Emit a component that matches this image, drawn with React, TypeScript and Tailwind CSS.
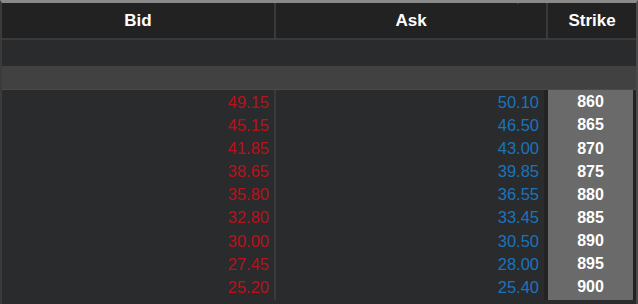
const rows = [
  { bid: "49.15", ask: "50.10", strike: "860" },
  { bid: "45.15", ask: "46.50", strike: "865" },
  { bid: "41.85", ask: "43.00", strike: "870" },
  { bid: "38.65", ask: "39.85", strike: "875" },
  { bid: "35.80", ask: "36.55", strike: "880" },
  { bid: "32.80", ask: "33.45", strike: "885" },
  { bid: "30.00", ask: "30.50", strike: "890" },
  { bid: "27.45", ask: "28.00", strike: "895" },
  { bid: "25.20", ask: "25.40", strike: "900" },
];

const cols = "grid grid-cols-[274px_272px_88px]";

export default function App() {
  return (
    <div className="relative h-[304px] w-[638px] overflow-hidden border-t-[3px] border-l-2 border-r-2 border-t-[#8a8a8a] border-l-[#3b3b3b] border-r-[#4a4a4a] bg-[#2a2b2d] font-['Liberation_Sans',Arial,sans-serif]">
      <span className="absolute left-[515px] top-0 h-px w-[2px] bg-[#2020ff]" />
      <div className={`${cols} h-[37px] bg-[#222222] text-[17px] font-bold text-white`}>
        <div className="flex items-center justify-center border-r-2 border-b-2 border-[#3a3a3a]">Bid</div>
        <div className="flex items-center justify-center border-r-2 border-b-2 border-[#3a3a3a]">Ask</div>
        <div className="flex items-center justify-center border-b-2 border-[#3a3a3a]">Strike</div>
      </div>
      <div className="h-[26px] bg-[#2a2b2d]" />
      <div className="h-[24px] border-b border-[#4a4a4a] bg-[#414141]" />
      {rows.map((r) => (
        <div key={r.strike} className={`${cols} h-[23.1px] text-[16.5px]`}>
          <div className="flex items-center justify-end border-r-2 border-[#3a3a3a] pr-[5px] text-[#b8121b]">{r.bid}</div>
          <div className="flex items-center justify-end border-r-[4px] border-[#232323] pr-[5px] text-[#1a74bb]">{r.ask}</div>
          <div className="flex items-center justify-center border-r-[3px] border-[#232323] bg-[#6a6a6a] text-[16px] font-bold text-white">
            {r.strike}
          </div>
        </div>
      ))}
    </div>
  );
}
